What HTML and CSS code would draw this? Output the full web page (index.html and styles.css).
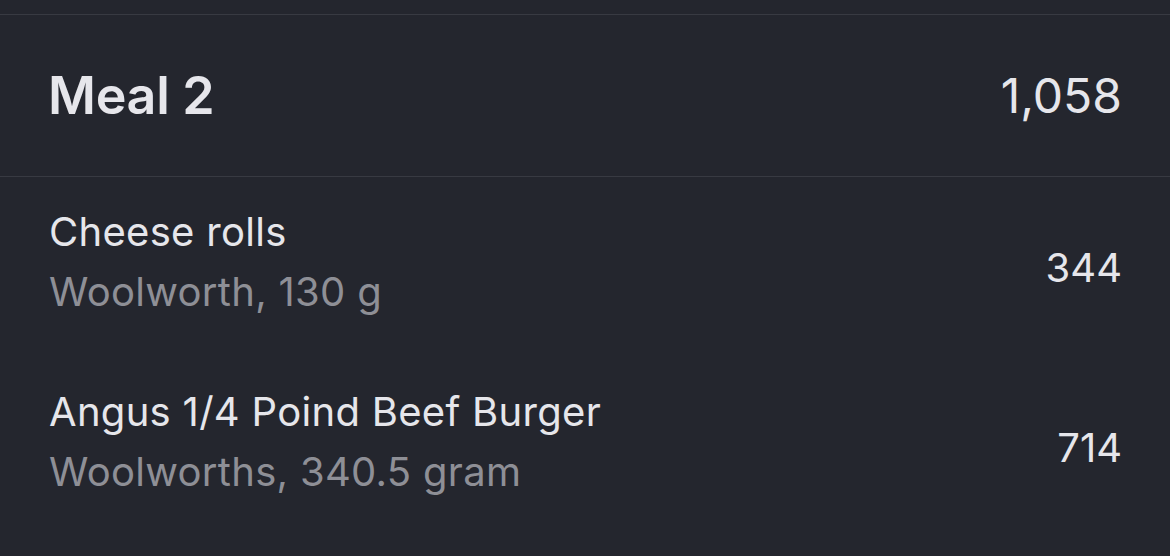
FILE: index.html
```html
<!DOCTYPE html>
<html lang="en">
<head>
  <meta charset="UTF-8">
  <meta name="viewport" content="width=device-width, initial-scale=1.0">
  <title>Meal 2</title>
  <link rel="stylesheet" href="styles.css">
</head>
<body>

<div class="top-bar"></div>

<div class="meal">
  <div class="meal-header">
    <h2 class="meal-title">Meal 2</h2>
    <span class="meal-total">1,058</span>
  </div>

  <ul class="food-list">
    <li class="food-item">
      <div class="food-info">
        <div class="food-name">Cheese rolls</div>
        <div class="food-detail">Woolworth, 130 g</div>
      </div>
      <span class="food-kcal">344</span>
    </li>
    <li class="food-item">
      <div class="food-info">
        <div class="food-name">Angus 1/4 Poind Beef Burger</div>
        <div class="food-detail">Woolworths, 340.5 gram</div>
      </div>
      <span class="food-kcal">714</span>
    </li>
  </ul>
</div>

</body>
</html>
```

FILE: styles.css
```css
body {
    margin: 0;
    font-family: Inter, 'Noto Sans', sans-serif;
    background-color: #24262e;
    color: #e6e6eb;
    overflow: hidden;
}
.top-bar {
    height: 14px;
    border-bottom: 1px solid #383a42;
}
.meal-header {
    height: 161px;
    display: flex;
    justify-content: space-between;
    align-items: center;
    padding: 0 48px 0 48px;
    border-bottom: 1px solid #383a42;
}
.meal-title {
    margin: 0;
    font-size: 52px;
    font-weight: 600;
    letter-spacing: -0.3px;
}
.meal-total {
    font-size: 48px;
    font-weight: 400;
}
.food-list {
    list-style: none;
    margin: 0;
    padding: 0;
}
.food-item {
    display: flex;
    justify-content: space-between;
    align-items: center;
    padding: 25px 48px 35px 49px;
}
.food-name,
.food-detail {
    font-size: 40px;
    line-height: 60px;
    letter-spacing: 0.3px;
}
.food-detail {
    color: #8e8f96;
}
.food-kcal {
    font-size: 40px;
    padding-top: 10px;
}
```
